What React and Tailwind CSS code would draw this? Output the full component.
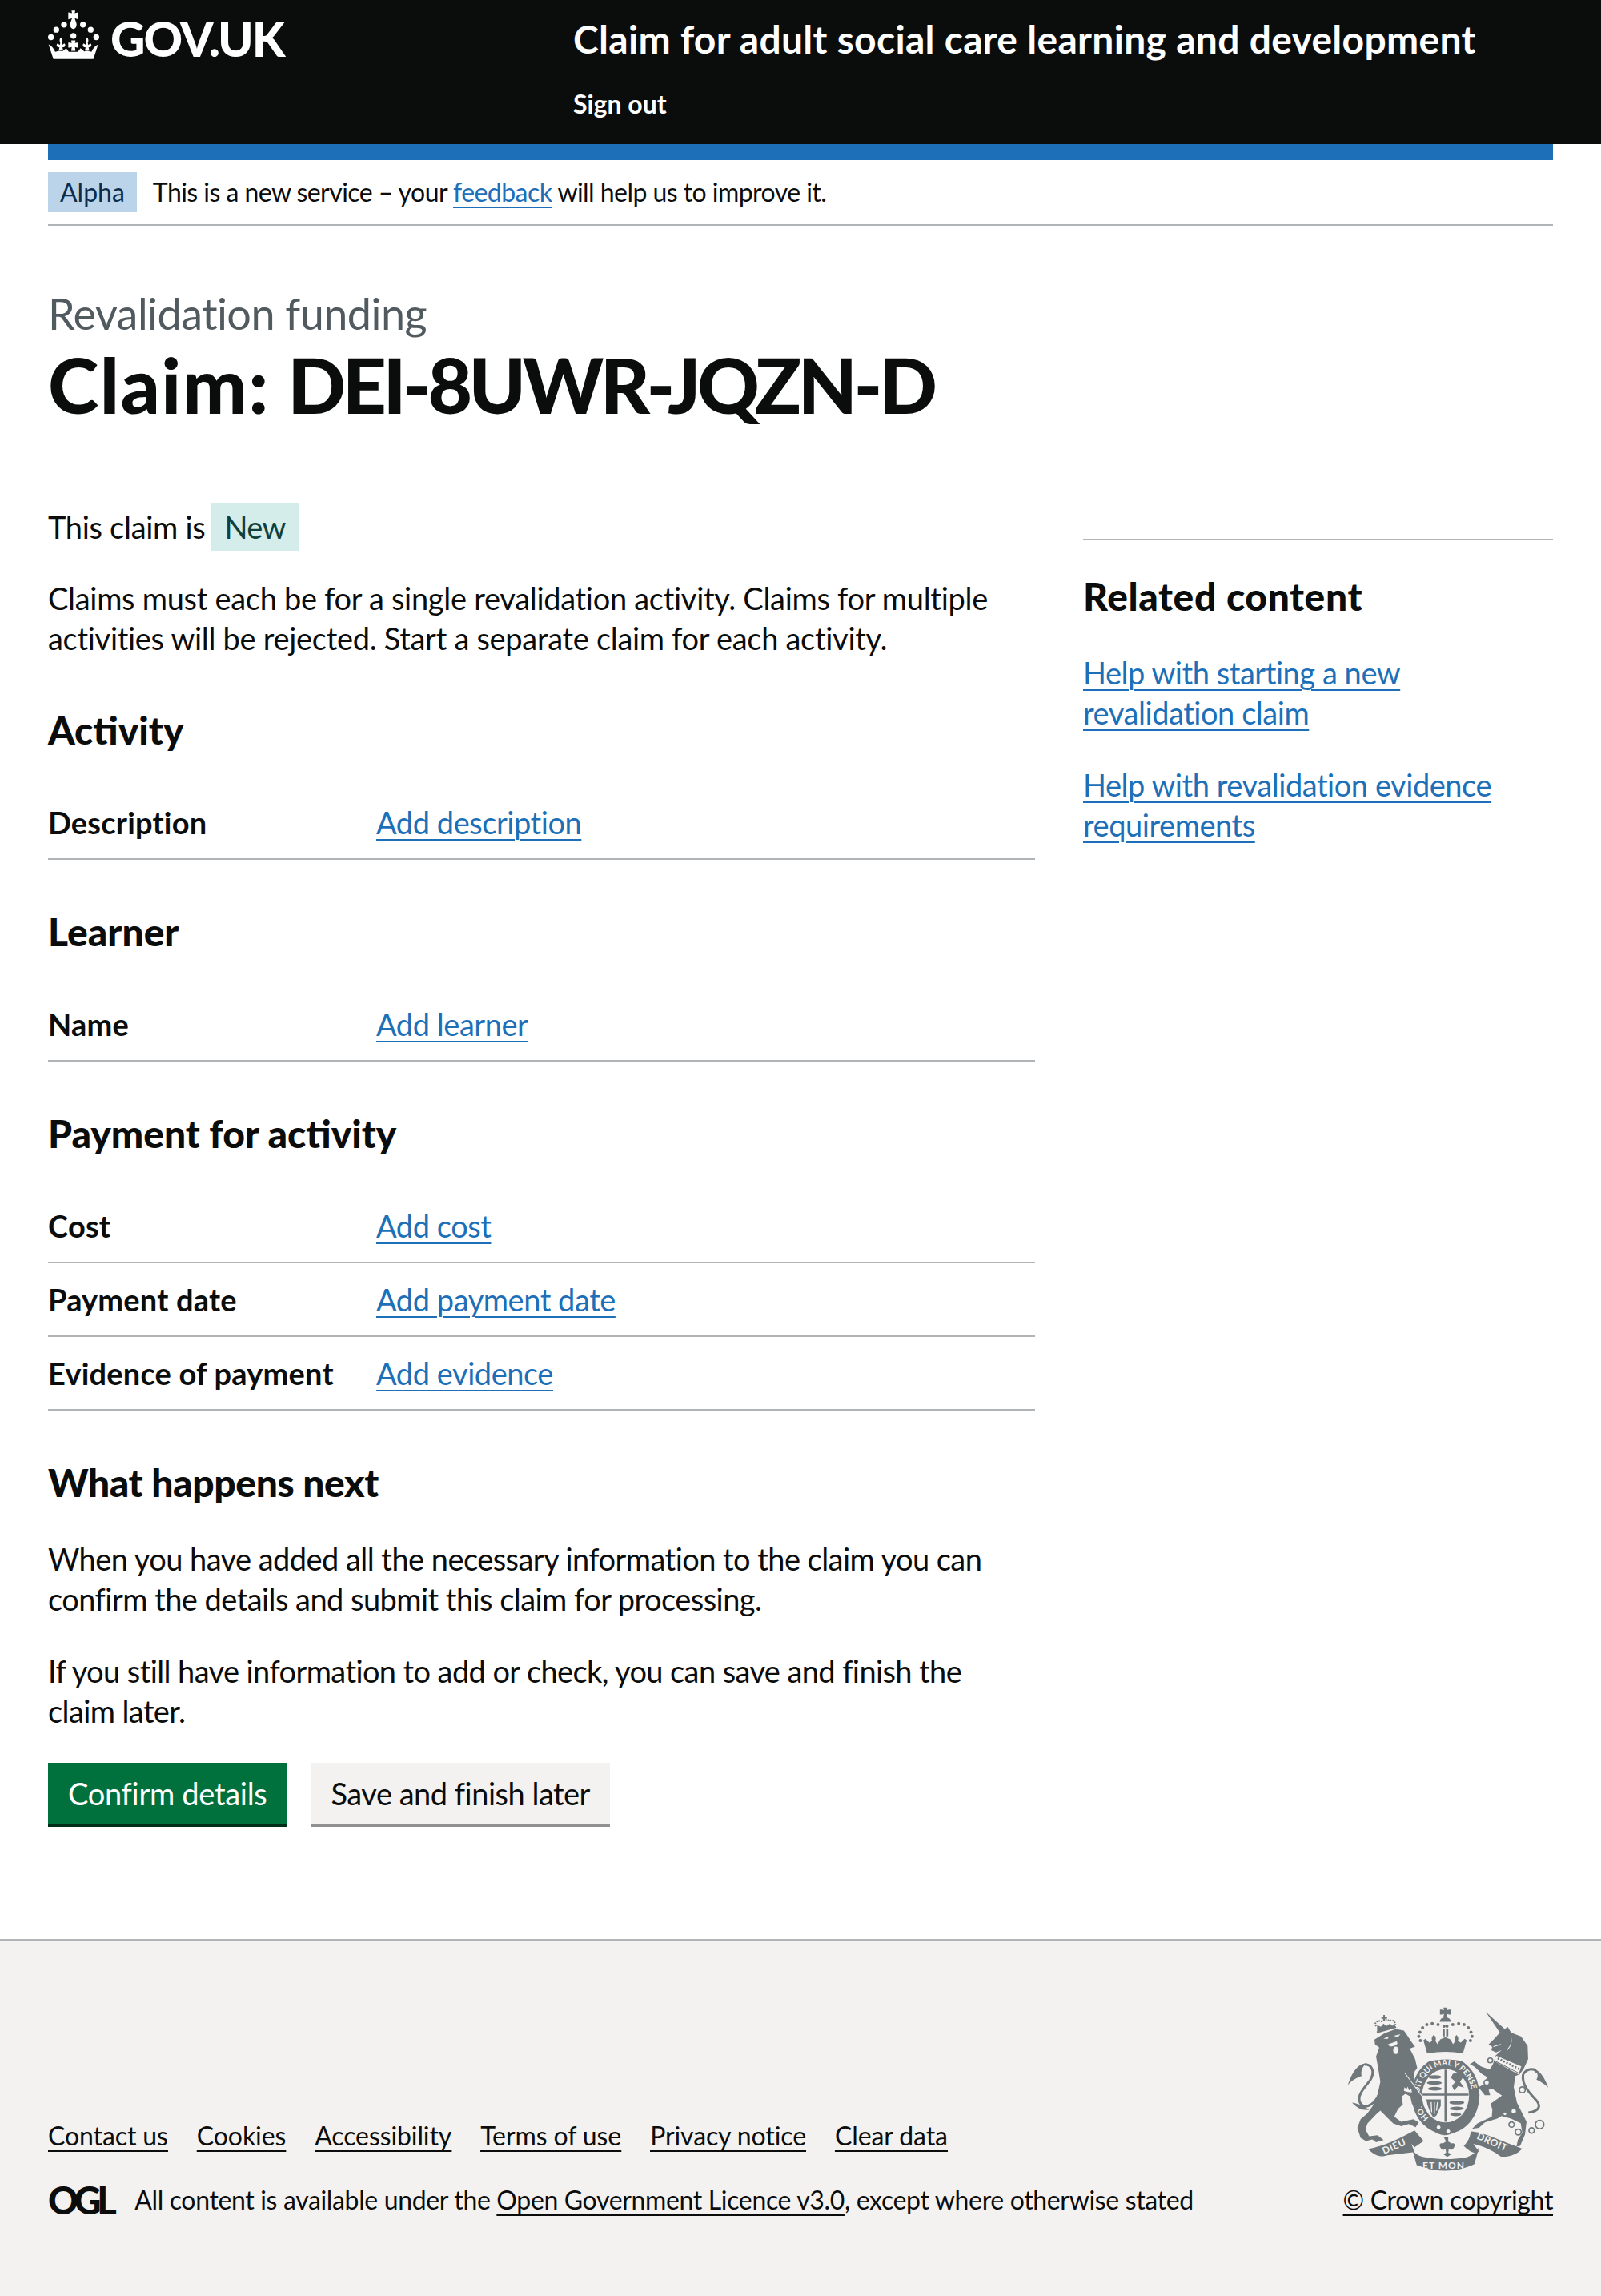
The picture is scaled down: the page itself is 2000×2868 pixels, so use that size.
const font = "font-['Lato','Noto_Sans',sans-serif]";
const link = "text-[#1d70b8] underline decoration-2 underline-offset-[6px]";
const bg = "#f3f2f1";

const Crown = () => (
  <svg viewBox="30 25 192 182" className="w-[64px] h-[61px] fill-white">
    <path d="M118 25h14l-2 10 9-2 5-1v26l-5-1-9-3 5 15c4 8 3 24-10 25-13-1-14-17-10-25l5-15-9 3-5 1V32l5 1 9 2z" />
    <circle cx="90" cy="78" r="11" />
    <circle cx="161" cy="78" r="11" />
    <circle cx="61" cy="97" r="11" />
    <circle cx="190" cy="97" r="11" />
    <circle cx="41" cy="125" r="11" />
    <circle cx="211" cy="125" r="11" />
    <circle cx="125" cy="120" r="11" />
    <path d="M117 137h16l-2 10 8-2h5v19h-5l-8-2 2 14h-16l2-14-8 2h-5v-19h5l8 2z" />
    <path d="M78 126c6 6 7 12 3 20l2 8 8-6c5 4 5 10 0 14l-7 1 3 12H70l3-12-7-1c-5-4-5-10 0-14l8 6 2-8c-4-8-3-14 2-20z" />
    <path d="M176 126c6 6 7 12 3 20l2 8 8-6c5 4 5 10 0 14l-7 1 3 12h-17l3-12-7-1c-5-4-5-10 0-14l8 6 2-8c-4-8-3-14 2-20z" />
    <path d="M32 152C42 157 52 166 57 180L72 176L84 178L98 166L108 180L142 180L152 166L166 178L178 176L193 180C198 166 208 157 218 152L200 207H50Z" />
  </svg>
);

const Row = ({ label, action }) => (
  <div className="flex border-b-2 border-[#b1b4b6] py-5">
    <dt className="w-[410px] font-bold tracking-[0.2px]">{label}</dt>
    <dd className="tracking-[-0.45px]"><a className={link}>{action}</a></dd>
  </div>
);

const Lion = () => (
  <g transform="translate(120 90)">
    {/* crown on the head */}
    <path d="M145 40h6v8h8v6h-8v8h-6v-8h-7v-6h7z" />
    <path d="M118 82c-8-14 4-24 20-18 8-8 22-8 30-2 10-6 24 2 22 18" fill="none" stroke="#6f777b" strokeWidth="6" strokeDasharray="5 4" />
    <path d="M122 78l14 6 10-12 10 10 14-10 8 8 10-6 2 10-68 20z" />
    <path d="M120 102l72-20 2 6-72 20z" />
    {/* body */}
    <path d="M112 132L150 108L192 92L222 98C235 115 245 135 264 158L244 166L264 205L272 238L262 252L258 300L278 330L292 352L284 392L268 392L252 372L246 345L228 335L214 345L218 375L200 392L186 420L212 440L258 430L278 442L266 460L240 448L212 456L182 446L152 416L134 398L118 412L86 446L78 468L92 494L124 490L146 508L118 516L104 506L80 512L60 500L48 462L60 430L86 408L110 374L124 336L134 290L126 240L118 195L130 162L114 150Z" />
    <path d="M226 258L292 346" fill="none" stroke={bg} strokeWidth="3" />
    <path d="M224 310l8 8 4-10 6 14 8-6 2 14-16-2-14-4z" fill={bg} />
    <path d="M145 128l22-8-6 10zM185 118l24-6-10 12zM162 150l34-12 2 10-12 8-16 2z" fill={bg} />
    <ellipse cx="192" cy="172" rx="10" ry="14" fill={bg} />
    {/* tail */}
    <path d="M128 340C105 385 70 392 58 368C45 340 75 312 95 285C115 255 105 225 75 225" fill="none" stroke="#6f777b" strokeWidth="9" />
    <path d="M80 221C50 222 30 250 12 302C30 282 46 274 64 268C60 250 66 236 80 221Z" />
    <path d="M28 368C50 372 76 380 92 396L64 394C50 388 38 380 28 368Z" />
  </g>
);

const Unicorn = () => (
  <g transform="translate(495 90)">
    <path d="M153 28L224 92L236 85L248 106L285 120L310 155L312 205L296 240L280 262L264 268L258 310L270 368L292 412L306 440L300 488L282 530L268 532L274 506L290 480L284 445L248 428L212 418L196 428L150 442L128 462L102 466L122 446L176 420L178 395L172 372L214 342L178 316L164 320L170 340L150 340L126 310L148 298L158 272L138 260L112 234L94 224L110 214L135 232L168 244L180 225L190 192L212 172L192 180L174 172L178 160L164 150L186 128L206 106Z" />
    <path d="M192 192L286 232L276 262L184 212Z" fill={bg} />
    <path d="M198 202L278 242" fill="none" stroke="#6f777b" strokeWidth="8" strokeDasharray="6 6" />
    <path d="M188 212L274 256" fill="none" stroke="#6f777b" strokeWidth="3" />
    <path d="M248 125C252 145 245 160 232 172M182 158L210 150" fill="none" stroke={bg} strokeWidth="3" />
    <circle cx="282" cy="365" r="8" fill={bg} />
    <circle cx="258" cy="400" r="8" fill={bg} />
    <circle cx="225" cy="410" r="5" fill={bg} />
    {[[170, 210, 9], [157, 293, 10], [290, 320, 11], [250, 450, 10], [275, 478, 11], [325, 472, 10], [355, 450, 16]].map(([cx, cy, r]) => (
      <circle key={`ring-${cx}`} cx={cx} cy={cy} r={r} fill={bg} stroke="#6f777b" strokeWidth="5" />
    ))}
  </g>
);

const Arms = () => (
  <svg viewBox="130 100 755 620" className="w-[252px] h-[207px] fill-[#6f777b]">
    {/* crown over the shield */}
    <path d="M490 102h14l-2 10 10-2h5v18h-5l-10-2 2 10h-14l2-10-10 2h-5v-18h5l10 2z" />
    <path d="M476 155a21 17 0 0 1 42 0z" />
    {[[492, 172], [470, 166], [448, 162], [428, 166], [412, 178], [402, 194], [398, 210], [404, 226], [503, 172], [525, 166], [547, 162], [567, 166], [583, 178], [593, 194], [597, 210], [591, 226]].map(([cx, cy]) => (
      <circle key={`${cx}-${cy}`} cx={cx} cy={cy} r="6" />
    ))}
    <path d="M487 182h8v28h-8zM500 182h8v28h-8z" />
    <path d="M455 205c8 8 8 14 5 22l8 12 10-18 19-8 19 8 10 18 8-12c-3-8-3-14 5-22 8 8 8 14 5 22l11 6 14-14 8 5-14 50c-44-8-86-8-134 0l-14-50 8-5 14 14 11-6c-3-8-3-14 5-22z" />
    {/* garter and quartered shield */}
    <ellipse cx="498" cy="430" rx="127" ry="145" />
    <path d="M428 292c40-14 100-14 142 0l-6 12c-38-10-90-10-130 0z" fill={bg} />
    <ellipse cx="498" cy="432" rx="88" ry="100" fill={bg} />
    <path id="garter" d="M435 516A98 112 0 1 1 561 516" fill="none" />
    <text fontSize="30" fontWeight="700" fill={bg} fontFamily="Lato">
      <textPath href="#garter">HONI SOIT QUI MAL Y PENSE</textPath>
    </text>
    <path d="M412 424h172v8H412zM494 334h8v196h-8z" />
    {[[458, 362, 24], [456, 384, 28], [458, 406, 26], [540, 458, 28], [540, 480, 26], [536, 502, 20]].map(([cx, cy, rx]) => (
      <ellipse key={`${cx}-${cy}`} cx={cx} cy={cy} rx={rx} ry="7" />
    ))}
    <path d="M525 350L550 345L562 365L552 380L567 402L545 396L530 412L522 395L535 380L518 365Z" />
    <path d="M426 446L480 446L480 470L464 506L452 514C440 496 430 472 426 446Z" />
    <path d="M444 456L446 494M456 456L456 500M468 456L464 488" stroke={bg} strokeWidth="4" fill="none" />
    {/* base of the shield */}
    <path d="M430 530c10-12 22-14 32 0 22 14 46 18 72 10l14-12 18 8c-20 28-48 44-72 44-28-2-52-18-64-50z" />
    <circle cx="472" cy="550" r="7" fill={bg} />
    <circle cx="508" cy="565" r="7" fill={bg} />
    <Lion />
    <Unicorn />
    {/* unicorn tail */}
    <path d="M788 352C805 325 835 330 838 345M788 352C782 390 810 420 838 450C855 470 850 490 808 495" fill="none" stroke="#6f777b" strokeWidth="9" />
    <path d="M825 332C850 335 870 365 882 402C865 385 850 378 838 372C848 355 840 340 825 332Z" />
    {/* motto ribbon */}
    <path d="M208 632C270 620 330 590 382 562L416 602L382 625L370 612L382 643L280 655C250 665 232 655 208 632Z" />
    <path d="M372 628C380 650 400 660 430 664C480 672 530 670 570 664C595 658 612 645 624 622L606 688C540 720 460 720 390 692Z" />
    <path d="M592 566C640 568 700 600 785 630C765 652 735 662 705 660C680 640 640 620 602 612L622 640C612 655 585 640 566 620C580 605 590 590 592 566Z" />
    <path d="M490 585h18v18l12 8c8-4 16 2 10 14-4 10-14 12-20 6l-2 14 12 6-16 10-14-10 10-6-2-14c-6 6-16 4-20-6-6-12 2-18 10-14l12-8z" />
    <text x="268" y="652" fontSize="36" fontWeight="700" fill={bg} fontFamily="Lato" letterSpacing="2" transform="rotate(-24 268 652)">DIEU</text>
    <text x="412" y="704" fontSize="36" fontWeight="700" fill={bg} fontFamily="Lato" letterSpacing="3">ET MON</text>
    <text x="612" y="592" fontSize="36" fontWeight="700" fill={bg} fontFamily="Lato" letterSpacing="2" transform="rotate(24 612 592)">DROIT</text>
  </svg>
);

export default function App() {
  return (
    <div className={`${font} text-[38px] leading-[50px] tracking-[-0.3px] text-[#0b0c0c] min-h-[2868px] flex flex-col`}>
      <header className="bg-[#0b0c0c] h-[180px] text-white px-[60px] flex">
        <div className="w-[656px] flex items-start pt-[13px] gap-[14px]">
          <Crown />
          <span className="font-black text-[60px] leading-[60px] mt-[5px] tracking-[-2px]">GOV.UK</span>
        </div>
        <div className="pt-[24px]">
          <div className="font-bold text-[48px] leading-[50px] tracking-[0.3px]">Claim for adult social care learning and development</div>
          <div className="font-bold text-[32px] leading-[40px] mt-[36px] tracking-normal">Sign out</div>
        </div>
      </header>

      <div className="mx-[60px]">
        <div className="h-[20px] bg-[#1d70b8]" />
        <div className="flex items-center gap-[20px] h-[82px] border-b-2 border-[#b1b4b6] text-[32px] tracking-[-0.55px]">
          <span className="bg-[#bbd4ea] text-[#0c2d4a] px-[15px] h-[50px] flex items-center tracking-normal">Alpha</span>
          <p>This is a new service – your <a className={link}>feedback</a> will help us to improve it.</p>
        </div>

        <div className="pt-[80px]">
          <div className="text-[54px] leading-[60px] text-[#505a5f] tracking-[-0.55px]">Revalidation funding</div>
          <h1 className="font-black text-[96px] leading-[100px] mt-[8px]">
            <span className="tracking-[1.5px]">Claim:</span> <span className="tracking-[-4.5px]">DEI-8UWR-JQZN-D</span>
          </h1>
        </div>

        <div className="flex gap-[60px] mt-[98px]">
          <main className="w-[1233px]">
            <p className="flex items-center gap-[8px]">This claim is <span className="bg-[#d4ecea] text-[#10403c] px-[16px] h-[60px] flex items-center tracking-[-0.6px]">New</span></p>
            <p className="mt-[34px]">Claims must each be for a single revalidation activity. Claims for multiple activities will be rejected. Start a separate claim for each activity.</p>

            <h2 className="font-black text-[48px] leading-[60px] mt-[60px] tracking-normal">Activity</h2>
            <dl className="mt-[40px]"><Row label="Description" action="Add description" /></dl>

            <h2 className="font-black text-[48px] leading-[60px] mt-[60px] tracking-normal">Learner</h2>
            <dl className="mt-[40px]"><Row label="Name" action="Add learner" /></dl>

            <h2 className="font-black text-[48px] leading-[60px] mt-[60px] tracking-normal">Payment for activity</h2>
            <dl className="mt-[40px]">
              <Row label="Cost" action="Add cost" />
              <Row label="Payment date" action="Add payment date" />
              <Row label="Evidence of payment" action="Add evidence" />
            </dl>

            <h2 className="font-black text-[48px] leading-[60px] mt-[60px] tracking-[-0.4px]">What happens next</h2>
            <p className="mt-[40px] tracking-[-0.55px]">When you have added all the necessary information to the claim you can confirm the details and submit this claim for processing.</p>
            <p className="mt-[40px] tracking-[-0.6px]">If you still have information to add or check, you can save and finish the claim later.</p>

            <div className="flex gap-[30px] mt-[40px]">
              <button className="bg-[#00703c] text-white h-[80px] px-[25px] border-b-[4px] border-[#002d18]">Confirm details</button>
              <button className="bg-[#f3f2f1] h-[80px] px-[25px] border-b-[4px] border-[#929191] tracking-[-0.5px]">Save and finish later</button>
            </div>
          </main>
          <aside className="flex-1 pt-[45px]">
            <div className="border-t-2 border-[#b1b4b6] pt-[40px] tracking-[-0.45px]">
              <h2 className="font-black text-[48px] leading-[60px] tracking-[0.6px]">Related content</h2>
              <a className={`block mt-[40px] ${link}`}>Help with starting a new revalidation claim</a>
              <a className={`block mt-[40px] ${link}`}>Help with revalidation evidence requirements</a>
            </div>
          </aside>
        </div>
      </div>

      <footer className="mt-auto h-[446px] bg-[#f3f2f1] border-t-2 border-[#b1b4b6] px-[60px] flex justify-between text-[32px] leading-[40px] tracking-[-0.35px]">
        <div className="flex flex-col justify-end pb-[100px]">
          <div className="flex gap-[36px] underline decoration-2 underline-offset-[6px] tracking-[-0.1px]">
            <a>Contact us</a><a>Cookies</a><a>Accessibility</a><a>Terms of use</a><a>Privacy notice</a><a>Clear data</a>
          </div>
          <div className="flex items-center gap-[28px] mt-[40px]">
            <span className="font-black text-[47px] leading-[40px] tracking-[-5.5px]">OGL</span>
            <p>All content is available under the <a className="underline decoration-2 underline-offset-[6px]">Open Government Licence v3.0</a>, except where otherwise stated</p>
          </div>
        </div>
        <div className="flex flex-col items-end justify-end pb-[100px]">
          <div className="mr-[5px]"><Arms /></div>
          <a className="underline decoration-2 underline-offset-[6px] mt-[14px]">© Crown copyright</a>
        </div>
      </footer>
    </div>
  );
}
